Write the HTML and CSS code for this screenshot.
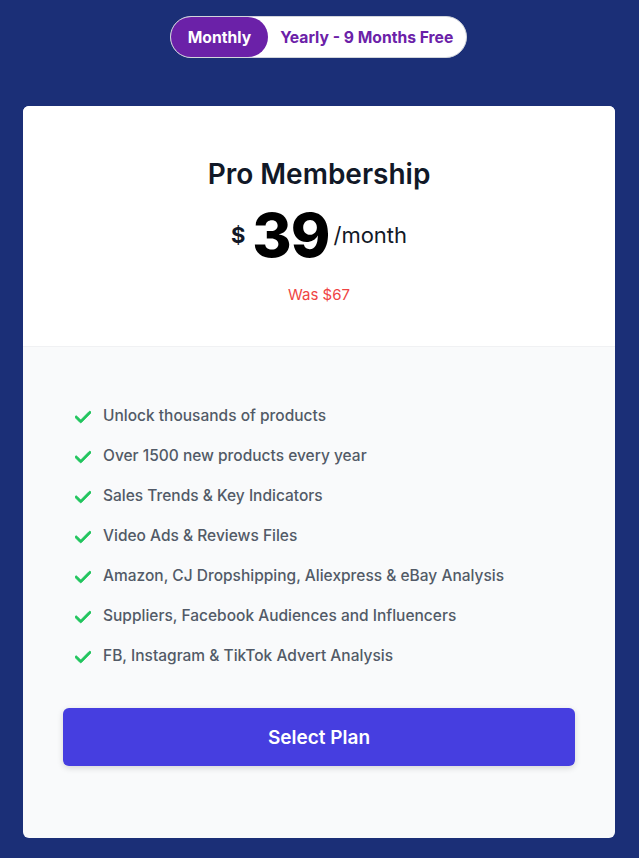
FILE: index.html
```html
<!DOCTYPE html>
<html>
<head>
<meta charset="utf-8">
<link rel="stylesheet" href="styles.css">
</head>
<body>
<div class="page">
  <div class="toggle">
    <button class="opt active">Monthly</button>
    <button class="opt">Yearly - 9 Months Free</button>
  </div>
  <div class="card">
    <div class="card-top">
      <h2 class="title">Pro Membership</h2>
      <div class="price">
        <span class="cur">$</span>
        <span class="amount">39</span>
        <span class="per">/month</span>
      </div>
      <div class="was">Was $67</div>
    </div>
    <div class="card-bottom">
      <ul class="features">
        <li><svg class="check" viewBox="3 3 14 14"><path d="M16.707 5.293a1 1 0 010 1.414l-8 8a1 1 0 01-1.414 0l-4-4a1 1 0 011.414-1.414L8 12.586l7.293-7.293a1 1 0 011.414 0z"/></svg><span>Unlock thousands of products</span></li>
        <li><svg class="check" viewBox="3 3 14 14"><path d="M16.707 5.293a1 1 0 010 1.414l-8 8a1 1 0 01-1.414 0l-4-4a1 1 0 011.414-1.414L8 12.586l7.293-7.293a1 1 0 011.414 0z"/></svg><span>Over 1500 new products every year</span></li>
        <li><svg class="check" viewBox="3 3 14 14"><path d="M16.707 5.293a1 1 0 010 1.414l-8 8a1 1 0 01-1.414 0l-4-4a1 1 0 011.414-1.414L8 12.586l7.293-7.293a1 1 0 011.414 0z"/></svg><span>Sales Trends &amp; Key Indicators</span></li>
        <li><svg class="check" viewBox="3 3 14 14"><path d="M16.707 5.293a1 1 0 010 1.414l-8 8a1 1 0 01-1.414 0l-4-4a1 1 0 011.414-1.414L8 12.586l7.293-7.293a1 1 0 011.414 0z"/></svg><span>Video Ads &amp; Reviews Files</span></li>
        <li><svg class="check" viewBox="3 3 14 14"><path d="M16.707 5.293a1 1 0 010 1.414l-8 8a1 1 0 01-1.414 0l-4-4a1 1 0 011.414-1.414L8 12.586l7.293-7.293a1 1 0 011.414 0z"/></svg><span>Amazon, CJ Dropshipping, Aliexpress &amp; eBay Analysis</span></li>
        <li><svg class="check" viewBox="3 3 14 14"><path d="M16.707 5.293a1 1 0 010 1.414l-8 8a1 1 0 01-1.414 0l-4-4a1 1 0 011.414-1.414L8 12.586l7.293-7.293a1 1 0 011.414 0z"/></svg><span>Suppliers, Facebook Audiences and Influencers</span></li>
        <li><svg class="check" viewBox="3 3 14 14"><path d="M16.707 5.293a1 1 0 010 1.414l-8 8a1 1 0 01-1.414 0l-4-4a1 1 0 011.414-1.414L8 12.586l7.293-7.293a1 1 0 011.414 0z"/></svg><span>FB, Instagram &amp; TikTok Advert Analysis</span></li>
      </ul>
      <button class="select">Select Plan</button>
    </div>
  </div>
</div>
</body>
</html>
```
FILE: styles.css
```css
* { box-sizing: border-box; }
html, body { margin: 0; padding: 0; }
body {
  background: #1b2f77;
  font-family: Inter, "Noto Sans", sans-serif;
  height: 858px;
  overflow: hidden;
}
.page {
  display: flex;
  flex-direction: column;
  align-items: center;
  padding-top: 16px;
}
.toggle {
  display: flex;
  background: #fff;
  border: 1px solid #d1d5db;
  border-radius: 999px;
  padding: 0;
  height: 42px;
  margin-right: 2px;
}
.opt {
  border: 0;
  background: transparent;
  font-family: inherit;
  font-weight: 700;
  font-size: 15.7px;
  color: #6b21a8;
  border-radius: 999px;
  padding: 0 13px 0 12px;
  height: 40px;
  cursor: pointer;
}
.opt.active {
  background: #6b21a8;
  color: #fff;
  padding: 0 17px;
}
.card {
  width: 592px;
  margin-top: 48px;
  margin-right: 1px;
  background: #f9fafb;
  border-radius: 6px;
  overflow: hidden;
}
.card-top {
  background: #fff;
  border-bottom: 1px solid #f0f1f3;
  height: 241px;
  display: flex;
  flex-direction: column;
  align-items: center;
  padding-top: 50px;
}
.title {
  margin: 0;
  font-size: 28px;
  font-weight: 600;
  color: #111827;
  line-height: 36px;
}
.price {
  display: flex;
  align-items: center;
  margin-top: 12px;
  color: #111827;
}
.cur { font-size: 22px; font-weight: 700; margin-right: 7px; }
.amount { font-size: 60px; font-weight: 800; color: #000; line-height: 62px; letter-spacing: -1px; }
.per { font-size: 22px; font-weight: 400; margin-left: 4px; }
.was {
  margin-top: 19px;
  color: #ef4444;
  font-size: 15px;
}
.card-bottom {
  padding: 57px 40px 72px;
}
.features {
  list-style: none;
  margin: 0;
  padding: 0 0 0 12px;
  display: flex;
  flex-direction: column;
  gap: 16px;
}
.features li {
  display: flex;
  align-items: center;
  gap: 12px;
  font-size: 15.5px;
  line-height: 24px;
  font-weight: 500;
  color: #525a67;
}
.check { width: 16px; height: 16px; flex: none; fill: #22c55e; stroke: #22c55e; stroke-width: 0.7; margin-top: 2px; }
.select {
  display: block;
  width: 100%;
  margin-top: 40px;
  height: 58px;
  border: 0;
  border-radius: 6px;
  background: #463ee0;
  color: #fff;
  font-family: inherit;
  font-size: 19px;
  font-weight: 600;
  box-shadow: 0 2px 6px rgba(0,0,0,0.15);
}
```
